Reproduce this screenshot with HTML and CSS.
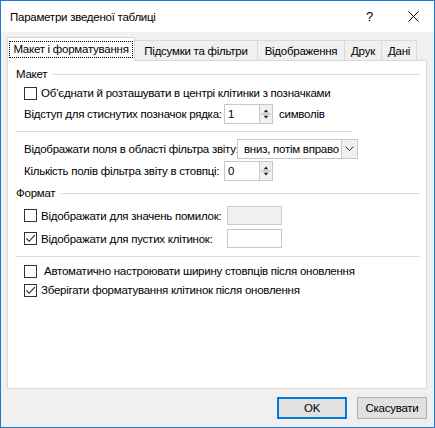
FILE: index.html
```html
<!DOCTYPE html>
<html lang="uk">
<head>
    <meta charset="UTF-8">
    <title>Параметри зведеної таблиці</title>
    <link rel="stylesheet" href="styles.css">
</head>
<body>
    <div class="window">
        <header class="titlebar">
            <span class="title">Параметри зведеної таблиці</span>
            <span class="help">?</span>
            <span class="close">
                <svg width="11" height="11" viewBox="0 0 11 11"><path d="M0.5 0.5 L10.5 10.5 M10.5 0.5 L0.5 10.5" stroke="#000" stroke-width="1" fill="none"/></svg>
            </span>
        </header>

        <div class="content">
            <nav class="tabs">
                <div class="tab active tab-1"><span class="focus">Макет і форматування</span></div>
                <div class="tab tab-2">Підсумки та фільтри</div>
                <div class="tab tab-3">Відображення</div>
                <div class="tab tab-4">Друк</div>
                <div class="tab tab-5">Дані</div>
            </nav>

            <section class="panel">
                <div class="legend legend-first"><span>Макет</span><i></i></div>

                <label class="row check-row r-merge">
                    <span class="box"></span>
                    <span>Об’єднати й розташувати в центрі клітинки з позначками</span>
                </label>

                <div class="row field-row r-indent">
                    <span class="lbl w-indent">Відступ для стиснутих позначок рядка:</span>
                    <span class="spin-input">
                        <span class="val">1</span>
                        <span class="spin">
                            <svg width="13" height="18" viewBox="0 0 13 18"><path d="M4 7 L6.5 4 L9 7 Z M4 11 L6.5 14 L9 11 Z" fill="#222"/><path d="M1 9 H12" stroke="#aaa"/></svg>
                        </span>
                    </span>
                    <span class="after">символів</span>
                </div>

                <div class="sep sep-short"></div>

                <div class="row field-row r-filter">
                    <span class="lbl w-filter">Відображати поля в області фільтра звіту:</span>
                    <span class="select">
                        <span class="val">вниз, потім вправо</span>
                        <span class="drop">
                            <svg width="9" height="6" viewBox="0 0 9 6"><path d="M0.5 0.5 L4.5 4.5 L8.5 0.5" stroke="#333" fill="none"/></svg>
                        </span>
                    </span>
                </div>

                <div class="row field-row r-count">
                    <span class="lbl w-indent">Кількість полів фільтра звіту в стовпці:</span>
                    <span class="spin-input">
                        <span class="val">0</span>
                        <span class="spin">
                            <svg width="13" height="18" viewBox="0 0 13 18"><path d="M4 7 L6.5 4 L9 7 Z M4 11 L6.5 14 L9 11 Z" fill="#222"/><path d="M1 9 H12" stroke="#aaa"/></svg>
                        </span>
                    </span>
                </div>

                <div class="legend legend-format"><span>Формат</span><i></i></div>

                <div class="row check-row r-err">
                    <span class="box"></span>
                    <span class="lbl w-check">Відображати для значень помилок:</span>
                    <span class="text-box disabled"></span>
                </div>

                <div class="row check-row r-empty">
                    <span class="box">
                        <svg width="11" height="11" viewBox="0 0 11 11"><path d="M1.5 5.5 L4.2 8.3 L9.8 2.2" stroke="#222" stroke-width="1.1" fill="none"/></svg>
                    </span>
                    <span class="lbl w-check">Відображати для пустих клітинок:</span>
                    <span class="text-box"></span>
                </div>

                <div class="sep sep-long"></div>

                <label class="row check-row r-auto">
                    <span class="box"></span>
                    <span class="pad">Автоматично настроювати ширину стовпців після оновлення</span>
                </label>

                <label class="row check-row r-keep">
                    <span class="box">
                        <svg width="11" height="11" viewBox="0 0 11 11"><path d="M1.5 5.5 L4.2 8.3 L9.8 2.2" stroke="#222" stroke-width="1.1" fill="none"/></svg>
                    </span>
                    <span>Зберігати форматування клітинок після оновлення</span>
                </label>
            </section>

            <footer class="buttons">
                <button class="btn btn-ok">OK</button>
                <button class="btn">Скасувати</button>
            </footer>
        </div>
    </div>
</body>
</html>
```

FILE: styles.css
```css
/* Basic Reset */
* {
    margin: 0;
    padding: 0;
    box-sizing: border-box;
}

body {
    font-family: "Liberation Sans", Arial, sans-serif;
    font-size: 11.5px;
    letter-spacing: -0.25px;
    color: #000;
    background: #fff;
}

/* Window frame */
.window {
    width: 435px;
    height: 428px;
    border: 1px solid #1c7bd0;
    background: #f0f0f0;
    display: flex;
    flex-direction: column;
}

.titlebar {
    height: 31px;
    background: #fff;
    display: flex;
    align-items: center;
    padding-left: 9px;
}

.title {
    flex: 1;
}

.help {
    width: 12px;
    margin-right: 30px;
    font-size: 13px;
}

.close {
    width: 11px;
    height: 11px;
    margin-right: 15px;
    display: flex;
}

.content {
    flex: 1;
    padding: 5px 7px 0 6px;
    display: flex;
    flex-direction: column;
}

/* Tabs */
.tabs {
    display: flex;
    height: 23px;
    align-items: flex-end;
}

.tab {
    height: 20px;
    border: 1px solid #d9d9d9;
    border-bottom: none;
    border-left: none;
    display: flex;
    align-items: center;
    justify-content: center;
    background: #f0f0f0;
    white-space: nowrap;
}

.tab.active {
    height: 24px;
    border-left: 1px solid #d9d9d9;
    background: #fff;
    margin-bottom: -1px;
    position: relative;
    z-index: 1;
}

.focus {
    border: 1px dotted #000;
    padding: 0 3px;
    line-height: 15px;
}

.tab-1 { width: 128px; }
.tab-2 { width: 123px; }
.tab-3 { width: 87px; }
.tab-4 { width: 37px; }
.tab-5 { width: 35px; }

/* Panel */
.panel {
    height: 329px;
    background: #fff;
    border: 1px solid #d9d9d9;
    display: flex;
    flex-direction: column;
    padding: 0 6px 0 8px;
}

.legend {
    height: 16px;
    display: flex;
    align-items: center;
    white-space: nowrap;
}

.legend i {
    flex: 1;
    height: 1px;
    background: #dcdcdc;
    margin-left: 6px;
}

.legend-first { margin-top: 5px; }
.legend-format { margin-top: 4px; }

.row {
    display: flex;
    align-items: center;
    white-space: nowrap;
    padding-left: 8px;
}

.check-row { height: 18px; }
.field-row { height: 20px; }

.r-merge { margin-top: 2px; }
.r-indent { margin-top: 2px; }
.r-filter { margin-top: 7px; }
.r-count { margin-top: 2px; }
.r-err { margin-top: 5px; height: 19px; }
.r-empty { margin-top: 4px; height: 19px; }
.r-auto { margin-top: 5px; }
.r-keep { margin-top: 1px; }

.box {
    width: 13px;
    height: 13px;
    border: 1px solid #333;
    background: #fff;
    margin-right: 4px;
    display: flex;
    align-items: center;
    justify-content: center;
}

.pad { padding-left: 3px; }

.sep {
    height: 1px;
    background: #dcdcdc;
}

.sep-short {
    margin-top: 7px;
    width: 336px;
}

.sep-long {
    margin-top: 8px;
}

.w-indent { width: 200px; }
.w-filter { width: 213px; }
.w-check { width: 186px; }

/* Inputs */
.spin-input {
    width: 49px;
    height: 20px;
    border: 1px solid #c8c8c8;
    display: flex;
    background: #fff;
}

.spin-input .val {
    flex: 1;
    padding-left: 3px;
    line-height: 18px;
}

.spin {
    width: 13px;
    border-left: 1px solid #c8c8c8;
    background: #f0f0f0;
    display: flex;
}

.after {
    margin-left: 6px;
}

.select {
    width: 121px;
    height: 20px;
    border: 1px solid #c8c8c8;
    display: flex;
    background: #fff;
}

.select .val {
    flex: 1;
    padding-left: 6px;
    line-height: 18px;
}

.drop {
    width: 16px;
    border-left: 1px solid #c8c8c8;
    background: #f0f0f0;
    display: flex;
    align-items: center;
    justify-content: center;
}

.text-box {
    width: 55px;
    height: 19px;
    border: 1px solid #c8c8c8;
    background: #fff;
}

.text-box.disabled {
    background: #f0f0f0;
    border-color: #cccccc;
}

/* Footer buttons */
.buttons {
    display: flex;
    justify-content: flex-end;
    gap: 10px;
    margin-top: 8px;
}

.btn {
    width: 70px;
    height: 22px;
    border: 1px solid #adadad;
    background: #e1e1e1;
    font-family: inherit;
    font-size: 11.5px;
    letter-spacing: -0.25px;
    color: #000;
}

.btn-ok {
    border: 2px solid #0078d7;
}
```
